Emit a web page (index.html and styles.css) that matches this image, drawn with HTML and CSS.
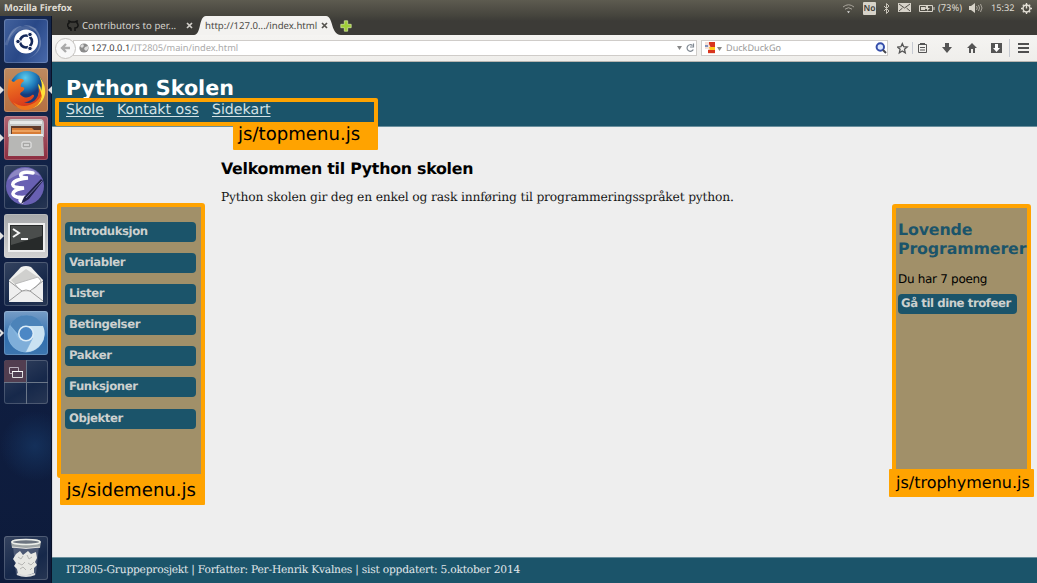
FILE: index.html
```html
<!DOCTYPE html>
<html lang="no">
<head>
<meta charset="utf-8">
<title>Python Skolen</title>
<link rel="stylesheet" href="styles.css">
</head>
<body>
<div class="desktop">
  <div class="panel">
    <span class="app-title">Mozilla Firefox</span>
    <div class="tray">
      <svg width="13" height="11" viewBox="0 0 13 11" fill="none" stroke="#aaa69c"><path d="M1 4q5.500-4.500 11 0M3 6.200q3.500-3 7 0"/><path d="M5 8.200h3l-1.500 2z" fill="#ddd" stroke="none"/></svg>
      <span class="kbd">No</span>
      <svg width="7" height="11" viewBox="0 0 7 11" fill="none" stroke="#c9c5ba"><path d="m1 3 5 5-2.500 2.500v-10L6 3 1 8"/></svg>
      <svg class="mail" width="13" height="10" viewBox="0 0 13 10"><path fill="#d7d3c9" d="M0 0h13v9H0z"/><path d="m1 1 5.500 4L12 1M1 8l3.500-3M12 8 8.500 5" fill="none" stroke="#55524b"/></svg>
      <svg class="battery" width="16" height="9" viewBox="0 0 16 9"><path d="M.5 1.500h13v6H.5zM15 3v3" fill="none" stroke="#d7d3c9"/><path d="M2 3h4v3H2zM7 2l-1 3h2v2l3-3H9V2z" fill="#d7d3c9"/></svg>
      <span class="percent">(73%)</span>
      <svg class="volume" width="14" height="10" viewBox="0 0 14 10"><path fill="#d7d3c9" d="M0 3h2l4-3v10L2 7H0z"/><path d="M7.500 3q1.500 2 0 4M9.500 2q2 3 0 6M11.500 1q3 4 0 8" fill="none" stroke="#aaa69c"/></svg>
      <span class="clock">15:32</span>
      <svg width="11" height="11" viewBox="0 0 12 12" fill="none" stroke="#e5e1d7" stroke-width="1.500"><circle cx="6" cy="6" r="3.800"/><path d="M6 0v6M0 6h2M10 6h2M2 2l1 1M9 3l1-1M2 10l1-1M10 10 9 9M6 10v2"/></svg>
    </div>
  </div>

  <div class="workspace">
    <nav class="launcher">
      <div class="tile dash"><svg viewBox="0 0 44 44"><path d="M4 22C5 7 20 3 29 10c10 8 9 26-8 31 10-3 17-10 16-19C36 11 28 4 18 7 12 9 8 14 4 22z" fill="#fff" opacity=".23"/><path d="M2 26c5-14 14-21 30-15" fill="none" stroke="#fff" stroke-width="3" opacity=".12"/><circle cx="22" cy="22.500" r="12" fill="#fff"/><circle cx="22" cy="22.500" r="6" fill="none" stroke="#15295b" stroke-width="2.600"/><path d="M18 22.500h-5M24 19l2.500-4.300M24 26l2.500 4.300" stroke="#fff" stroke-width="1.500"/><g fill="#15295b" stroke="#fff" stroke-width=".9"><circle cx="14" cy="22.500" r="2.200"/><circle cx="26" cy="15.500" r="2.200"/><circle cx="26" cy="29.500" r="2.200"/></g></svg></div>
      <div class="tile firefox active focus"><svg viewBox="0 0 44 44"><defs><radialGradient id="globe" cx=".45" cy=".2"><stop stop-color="#5ccbed"/><stop offset=".65" stop-color="#1d78b8"/><stop offset="1" stop-color="#173b7b"/></radialGradient><linearGradient id="flame" x2=".4" y2="1"><stop stop-color="#f48322"/><stop offset="1" stop-color="#d7361b"/></linearGradient></defs><circle cx="23" cy="20" r="17" fill="url(#globe)"/><path d="M35 8c4 5 7 11 6 18-2 10-10 15-19 15 11-4 15-14 12-25 3 2 3 5 3 7 2-6 0-11-2-15z" fill="#ffdf38"/><path d="M5 10c1 3 3 3 5 4 4-4 9-4 10-1-3 2-4 4-3 6 4 0 4 2 2 4-3 2-4 3-1 5 4 3 8 1 10-1 2-1 3 1 1 3-5 5-9 4-9 4 8 4 16-4 15-14 3 5 3 10 1 13-4 7-12 9-20 7C7 37 2 29 4 20c0-4 1-7 1-10z" fill="url(#flame)"/><path d="M9 34c10 8 24 3 29-8-1 10-8 16-17 16-5 0-9-3-12-8z" fill="#ed731d"/></svg></div>
      <div class="tile files active"><svg viewBox="0 0 44 44"><path d="M4 8q0-5 4-5h28q4 0 4 5v13H4z" fill="#c3c5c4"/><path d="M6 5h32v3H6z" fill="#e6e8e7"/><path d="M7 10h30v9H7z" fill="#603b2a"/><path d="M8 12h20l2 2h7v6H8z" fill="#d77c36"/><path d="M8 15h28" stroke="#ffc484"/><path d="M5 18h34l1 22H4z" fill="#b7b7b5"/><path d="M5 18h34v2H5z" fill="#eee"/><rect x="18" y="26" width="9" height="6" rx="1" fill="#a6a6a4" stroke="#eee"/><path d="M20 29h5" stroke="#fff"/></svg></div>
      <div class="tile emacs"><svg viewBox="0 0 44 44"><circle cx="21" cy="21" r="19" fill="#6860b3"/><path d="M4 15C8 1 29-1 36 11 23 6 14 8 4 15z" fill="#c6c3dc" opacity=".4"/><path d="M29 8C19 6 14 9 18 12q2 1 6 1C11 14 5 19 11 22q4 1 9 1C8 25 6 30 13 32q5 1 10 0c-7 1-9 3-5 5" fill="none" stroke="#fff" stroke-width="3.500" stroke-linecap="round"/><path d="m17 39 3-7 17-18 2 2-14 18z" fill="#202249"/><path d="m22 33 16-17" stroke="#6f70a2"/></svg></div>
      <div class="tile terminal active"><svg viewBox="0 0 44 44"><rect x="4" y="9" width="37" height="29" fill="#eee"/><rect x="6" y="11" width="33" height="25" fill="#272a2a"/><path d="M7 12h31v10L7 31z" fill="#626564" opacity=".6"/><path d="m9 15 6 4-6 4M17 25h7" fill="none" stroke="#f4f4f4" stroke-width="2"/></svg></div>
      <div class="tile envelope"><svg viewBox="0 0 44 44"><path d="M5 18 17 5q5-2 10 0l12 13v22H5z" fill="#f1f1ef"/><path d="M7 18 22 7l15 10-7 11H16z" fill="#d0d0ce"/><path d="m11 22 23-7 3 4-9 11H17z" fill="#fff" stroke="#bbb"/><path d="M5 19 19 30h8l12-11v21H5z" fill="#eee"/><path d="M5 39 18 29q4-2 8 0l13 10M5 19l13 10M39 19 26 29" fill="none" stroke="#999"/></svg></div>
      <div class="tile chromium active hollow"><svg viewBox="0 0 44 44"><circle cx="22" cy="23" r="18.500" fill="#86b6df"/><path d="M6 14a18.500 18.500 0 0 1 33 1H22a8 8 0 0 0-8 8z" fill="#4c83b9"/><path d="M22 15h17a18.500 18.500 0 0 1-17 26l7-14z" fill="#cae2f2"/><path d="M6 14 15 29l13-1-7 13A18.500 18.500 0 0 1 6 14z" fill="#7faed9"/><circle cx="22" cy="22.500" r="8" fill="#dcecf7"/><circle cx="22" cy="22.500" r="6.500" fill="#4c87c5"/></svg></div>
      <div class="tile spaces"><svg viewBox="0 0 44 44"><path d="M0 0h22v22H0z" fill="#523e50"/><path d="M0 22.500h44M22.500 0v44" stroke="#6b7789"/><path d="M5.500 7.500h9v6h-9z" fill="#523e50" stroke="#bab1bd"/><path d="M8.500 11.500h10v6h-10z" fill="#514154" stroke="#ddd"/><path d="M8 11.500h11" stroke="#fff"/></svg></div>
      <div class="tile trash"><svg viewBox="0 0 44 44"><path d="m9 10 3 28q10 4 20 0l3-28z" fill="#aeb2c2" opacity=".3"/><path d="M7 6q0-3 15-3t15 3l-1 6H8z" fill="#9da3a4"/><ellipse cx="22" cy="6" rx="14" ry="2.500" fill="#6c7480" stroke="#eceee9" stroke-width="1.500"/><path d="M8 11q14 3 28 0" stroke="#ddd" fill="none"/><path d="m12 18 4-3 3 4 5-4 3 3 5-2 1 6-2 4 2 3-3 3v5q-8 4-16 1l-1-5-3-3 2-3-3-4z" fill="#e7e7e3"/><path d="m14 21 3 2 2-3M23 19l2 4 3-2M14 27l4 2 3-3M24 27l3 2 3-3M16 33l3-2 3 3M26 34l2-2" fill="none" stroke="#b5b5b3"/><path d="m13 38q9 4 18 0" fill="none" stroke="#ddd" stroke-width="2"/></svg></div>
    </nav>

    <section class="browser">
      <div class="tabs">
        <div class="tab-bg">
          <svg width="12" height="12" viewBox="0 0 12 12"><path d="M4 11V9C2 9 2 8 1 8c1 0 1 1 3 0C0 8 0 4 2 3V1l2 1h4l2-1v2c2 2 1 5-2 5v3" fill="none" stroke="#151514" stroke-width="1.500"/></svg>
          <span class="tab-name">Contributors to per...</span><svg class="close" width="7" height="7" viewBox="0 0 7 7"><path d="m1 1 5 5M6 1 1 6" stroke="#d2cfca" stroke-width="1.700"/></svg>
        </div>
        <div class="tab">
          <svg class="tab-shape" width="147" height="19" viewBox="0 0 147 19"><path d="M0 19C8 18 4 1 12 0h120c8 1 4 18 15 19z" fill="#f3f2f0"/></svg>
          <span class="tab-text">http://127.0.../index.html</span><svg class="close" width="7" height="7" viewBox="0 0 7 7"><path d="m1 1 5 5M6 1 1 6" stroke="#55534e" stroke-width="1.700"/></svg>
        </div>
        <svg class="plus" width="12" height="12" viewBox="0 0 12 12"><path d="M4.300.8h3.400v3.500h3.500v3.400H7.700v3.500H4.300V7.700H.8V4.300h3.500z" fill="#9fce38" stroke="#d9eaa8" stroke-width=".7"/></svg>
      </div>
      <div class="toolbar">
        <span class="back"><svg width="12" height="10" viewBox="0 0 12 10"><path d="M6 1 2 5l4 4M2 5h8" fill="none" stroke="#aaa" stroke-width="2.300"/></svg></span>
        <div class="address"><svg width="10" height="10" viewBox="0 0 10 10"><circle cx="5" cy="5" r="4.600" fill="#8b8b8b"/><path d="M1 3 4 1l1 2-2 2zM6 4l3-1v3L7 8 5 6z" fill="#ddd"/></svg><span class="url"><b>127.0.0.1</b>/IT2805/main/index.html</span><svg class="url-tools" width="19" height="10" viewBox="0 0 19 10"><path d="M1 3h5L3.500 7z" fill="#888"/><path d="M16.500 2.500a3.300 3.300 0 1 0 .8 4M14 4h3.500V.5" fill="none" stroke="#7f8892" stroke-width="1.200"/></svg></div>
        <div class="search"><svg width="18" height="12" viewBox="0 0 18 12"><path d="M1 0h10v12H4V7H1z" fill="#f6dfd8"/><path d="M5 0h6v6H7L5 2zM4 8l7-1v4H4z" fill="#d8351e"/><path d="M5 5h6v3H6z" fill="#ffc619"/><path d="M1 3h3v2H1z" fill="#7c91bb"/><path d="M13 5h5l-2.500 4z" fill="#888"/></svg><span class="query">DuckDuckGo</span><svg class="magnifier" width="12" height="12" viewBox="0 0 12 12"><circle cx="5.300" cy="5" r="3.700" fill="#dce9ff" stroke="#354eaa" stroke-width="2"/><path d="m8 8 3 3" stroke="#46474d" stroke-width="2"/></svg></div>
        <svg class="actions" width="140" height="18" viewBox="897 39 140 18"><path d="m902.300 43.500 1.400 3.200 3.500.3-2.700 2.300.8 3.500-3-1.900-3 1.900.8-3.500-2.700-2.300 3.500-.3z" fill="none" stroke="#555" stroke-width="1.300"/><path d="M912.500 42v12M1009.500 39v18" stroke="#c6cad2"/><path d="M918.500 44.500h8v8h-8zM920 43.500h5M920 47.500h5M920 50h5" fill="none" stroke="#555"/><path d="M945 43h4v4h3l-5 6-5-6h3z" fill="#555"/><path d="m967 48 5-5 5 5h-2v5h-2v-4h-2v4h-2v-5z" fill="#555"/><path d="M991 43h11v10h-11z" fill="#555"/><path d="M995 44h3v4h2l-3.500 4-3.500-4h2z" fill="#fff"/><path d="M1018 44h11M1018 48h11M1018 52h11" stroke="#4f4f4f" stroke-width="2"/></svg>
      </div>

      <div class="page">
        <header class="site-header">
          <h1>Python Skolen</h1>
          <nav class="top-menu"><a href="#">Skole</a><a href="#">Kontakt oss</a><a href="#">Sidekart</a></nav>
          <div class="top-outline"></div><span class="label label-top">js/topmenu.js</span>
        </header>
        <main class="content">
          <aside class="side-menu">
            <a>Introduksjon</a><a>Variabler</a><a>Lister</a><a>Betingelser</a><a>Pakker</a><a>Funksjoner</a><a>Objekter</a>
            <span class="label label-side">js/sidemenu.js</span>
          </aside>
          <article><h2>Velkommen til Python skolen</h2><p>Python skolen gir deg en enkel og rask innføring til programmeringsspråket python.</p></article>
          <aside class="trophy-menu"><h3>Lovende<br>Programmerer</h3><p>Du har 7 poeng</p><a>Gå til dine trofeer</a><span class="label label-trophy">js/trophymenu.js</span></aside>
        </main>
        <footer><span>IT2805-Gruppeprosjekt | Forfatter: Per-Henrik Kvalnes | sist oppdatert: 5.oktober 2014</span></footer>
      </div>
    </section>
  </div>
</div>
</body>
</html>
```
FILE: styles.css
```css
* { box-sizing: border-box; }
body { margin: 0; overflow: hidden; font-family: "DejaVu Sans", sans-serif; text-rendering: geometricPrecision; }
h1, h2, h3, p { margin: 0; }
svg { flex: none; display: block; }
.desktop { width: 1037px; height: 583px; display: flex; flex-direction: column; }
.panel { height: 16px; flex: none; display: flex; justify-content: space-between; padding: 0 5px 0 4px; background: linear-gradient(#5d5b50, #45443d); color: #dfdbd2; font: 9.500px/16px "Noto Sans", sans-serif; }
.app-title { font-weight: 700; font-size: 9.400px; }
.tray { display: flex; align-items: center; }
.kbd { width: 13px; height: 13px; margin: 0 7px 0 8px; background: #d7d3c9; color: #3c3b37; font-size: 8.500px; font-weight: 600; line-height: 13px; text-align: center; border-radius: 1px; }
.mail { margin-left: 8px; }
.battery { margin: 0 3px 0 8px; }
.percent { width: 24px; font-size: 9.300px; }
.volume { margin-left: 7px; }
.clock { margin: 0 8px; width: 22px; font-size: 9.200px; }

.workspace { flex: 1; min-height: 0; display: flex; }
.launcher { width: 52px; flex: none; padding: 3px 4px; display: flex; flex-direction: column; gap: 4.700px; background: radial-gradient(circle at 35px 430px, #14305a 0, transparent 35px), linear-gradient(#14264b, #101f43 45%, #0d1b3b); border-right: 1px solid #0a1228; }
.tile { width: 44px; height: 44px; flex: none; position: relative; border-radius: 3px; background: linear-gradient(150deg, #35435f, #16284a 60%, #273653); box-shadow: inset 0 0 0 1px #ffffff30; }
.tile svg { width: 44px; height: 44px; border-radius: 3px; }
.dash { background: linear-gradient(120deg, #43629d, #294887 50%, #496aab); }
.firefox { background: linear-gradient(#bd8a60, #b67041); }
.files { background: linear-gradient(#ae6572, #8c2d40); }
.terminal { background: linear-gradient(#a6a8aa, #d2d2d2); }
.chromium { background: linear-gradient(#779dc7, #316eae 60%, #3d76af); }
.trash { margin-top: auto; }
.active::before { content: ""; position: absolute; left: -4px; top: 18px; border: 4px solid transparent; border-left-color: #e0e0e0; border-right: 0; }
.hollow::after { content: ""; position: absolute; left: -5px; top: 20px; border: 2px solid transparent; border-left-color: #14264b; border-right: 0; }
.focus::after { content: ""; position: absolute; right: -4px; top: 18px; border: 4px solid transparent; border-right-color: #e0e0e0; border-left: 0; }

.browser { flex: 1; min-width: 0; display: flex; flex-direction: column; font-family: "Noto Sans", sans-serif; }
.tabs { height: 19px; flex: none; display: flex; background: linear-gradient(#45443d, #3c3b37 5px); }
.tab-bg { width: 142px; display: flex; align-items: center; padding-left: 15px; color: #d6d3ce; font-size: 9.600px; line-height: 19px; }
.tab-name { width: 102px; margin-left: 3px; white-space: nowrap; letter-spacing: .05px; }
.tab-bg .close { margin-left: 2px; }
.tab { width: 147px; position: relative; display: flex; align-items: center; padding-left: 11px; color: #4c4a46; font-size: 9.600px; line-height: 19px; }
.tab-shape { position: absolute; left: 0; top: 0; }
.tab-text { position: relative; width: 116px; white-space: nowrap; }
.tab .close { position: relative; }
.plus { margin: 4px 0 0 -1px; }
.toolbar { height: 27px; flex: none; display: flex; align-items: center; background: linear-gradient(#f5f4f2, #efeeeb); border-bottom: 1px solid #b8b5b0; padding-left: 3px; }
.back { z-index: 1; width: 21px; height: 21px; border: 1px solid #c5c3c0; border-radius: 50%; background: #f8f8f8; display: grid; place-items: center; }
.address { margin-left: -3px; width: 624px; height: 16px; display: flex; align-items: center; border: 1px solid #cfccc9; background: #fff; padding: 0 1px 0 5px; }
.url { margin-left: 2px; color: #aaa; font-size: 9.250px; line-height: 14px; }
.url b { color: #44423f; font-weight: 400; }
.url-tools { margin-left: auto; }
.search { width: 187px; height: 16px; margin-left: 4px; display: flex; align-items: center; border: 1px solid #cfccc9; background: #fff; padding: 0 0 0 2px; }
.query { margin-left: 4px; color: #999; font-size: 9.100px; line-height: 14px; }
.magnifier { margin-left: auto; }
.actions { margin-left: 9px; }

.page { flex: 1; min-height: 0; display: flex; flex-direction: column; background: #eee; font-family: "DejaVu Sans", sans-serif; border-left: 1px solid #d9dce2; }
.site-header { height: 65px; flex: none; position: relative; z-index: 1; margin-left: -1px; padding: 14px 0 0 14px; background: #1b546a; border-bottom: 1px solid #6a8f9d; }
h1 { font-size: 20.700px; line-height: 24px; color: #fff; }
.top-menu { display: flex; gap: 13px; font-size: 14.150px; line-height: 20px; }
.top-menu a { color: #d5e2e5; text-decoration: underline; text-underline-offset: 1.500px; text-decoration-thickness: 1px; }
.top-outline { position: absolute; left: 3px; top: 36px; width: 323px; height: 28px; border: 4px solid #ffa300; border-radius: 2px; }
.label { position: absolute; background: #ffa300; color: #000; white-space: nowrap; border-radius: 1px; font-size: 18.100px; }
.label-top { left: 181px; top: 60px; width: 145px; height: 28px; padding-left: 5px; line-height: 26px; }
.content { flex: 1; min-height: 0; display: flex; align-items: flex-start; }
.side-menu, .trophy-menu { position: relative; flex: none; background: #a19069; border: 4px solid #ffa300; border-radius: 3px; }
.side-menu { width: 148px; height: 275px; margin: 76px 0 0 4px; padding: 15px 5px 0 4px; display: flex; flex-direction: column; gap: 11.100px; }
.side-menu a, .trophy-menu a { display: block; height: 20px; padding-left: 4px; border-radius: 4px; background: #1b546a; color: #ccd0ce; font-size: 11.700px; letter-spacing: -.43px; font-weight: 700; line-height: 19px; }
.label-side { left: -1px; top: 268px; width: 145px; height: 30px; padding-left: 6.500px; line-height: 31px; }
article { width: 687px; padding: 31px 0 0 16px; }
h2 { font-size: 15.800px; letter-spacing: -.25px; line-height: 21px; color: #000; white-space: nowrap; }
article p { margin-top: 9px; font: 12.300px/19px "DejaVu Serif", serif; letter-spacing: -.18px; color: #171717; white-space: nowrap; }
.trophy-menu { width: 139px; height: 270px; margin-top: 77px; padding: 13px 0 0 2px; }
h3 { font-size: 15.800px; letter-spacing: -.13px; line-height: 18.500px; color: #1b546a; white-space: nowrap; }
.trophy-menu p { font-size: 12px; letter-spacing: -.3px; line-height: 18px; margin-top: 12px; }
.trophy-menu a { width: 118.500px; margin-top: 6px; padding-left: 3px; white-space: nowrap; }
.trophy-menu .label { font-size: 16px; }
.label-trophy { left: -7px; top: 261px; width: 145px; height: 28px; padding-left: 7px; line-height: 28px; }
footer { height: 26px; flex: none; margin-left: -1px; padding-left: 14px; background: #1b546a; border-top: 1px solid #6a8f9d; color: #e1e8ea; font: 10.700px/24px "DejaVu Serif", serif; letter-spacing: -.23px; }
```
